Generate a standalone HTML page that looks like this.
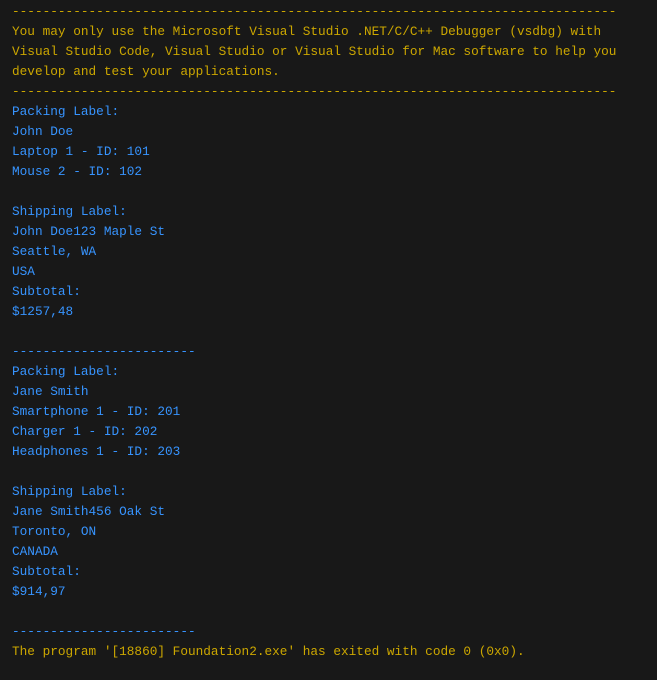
<!DOCTYPE html>
<html><head><meta charset="utf-8"><style>
html,body{margin:0;padding:0;background:#181818;width:657px;height:680px;overflow:hidden}
pre{margin:0;padding:2px 0 0 12px;font-family:"Liberation Mono",monospace;font-size:12.75px;line-height:20px;white-space:pre;color:#3794ff}
.o{color:#cca700}
</style></head><body><pre><span class="o">-------------------------------------------------------------------------------
You may only use the Microsoft Visual Studio .NET/C/C++ Debugger (vsdbg) with
Visual Studio Code, Visual Studio or Visual Studio for Mac software to help you
develop and test your applications.
-------------------------------------------------------------------------------</span>
Packing Label:
John Doe
Laptop 1 - ID: 101
Mouse 2 - ID: 102

Shipping Label:
John Doe123 Maple St
Seattle, WA
USA
Subtotal:
$1257,48

------------------------
Packing Label:
Jane Smith
Smartphone 1 - ID: 201
Charger 1 - ID: 202
Headphones 1 - ID: 203

Shipping Label:
Jane Smith456 Oak St
Toronto, ON
CANADA
Subtotal:
$914,97

------------------------
<span class="o">The program '[18860] Foundation2.exe' has exited with code 0 (0x0).</span>
</pre></body></html>
